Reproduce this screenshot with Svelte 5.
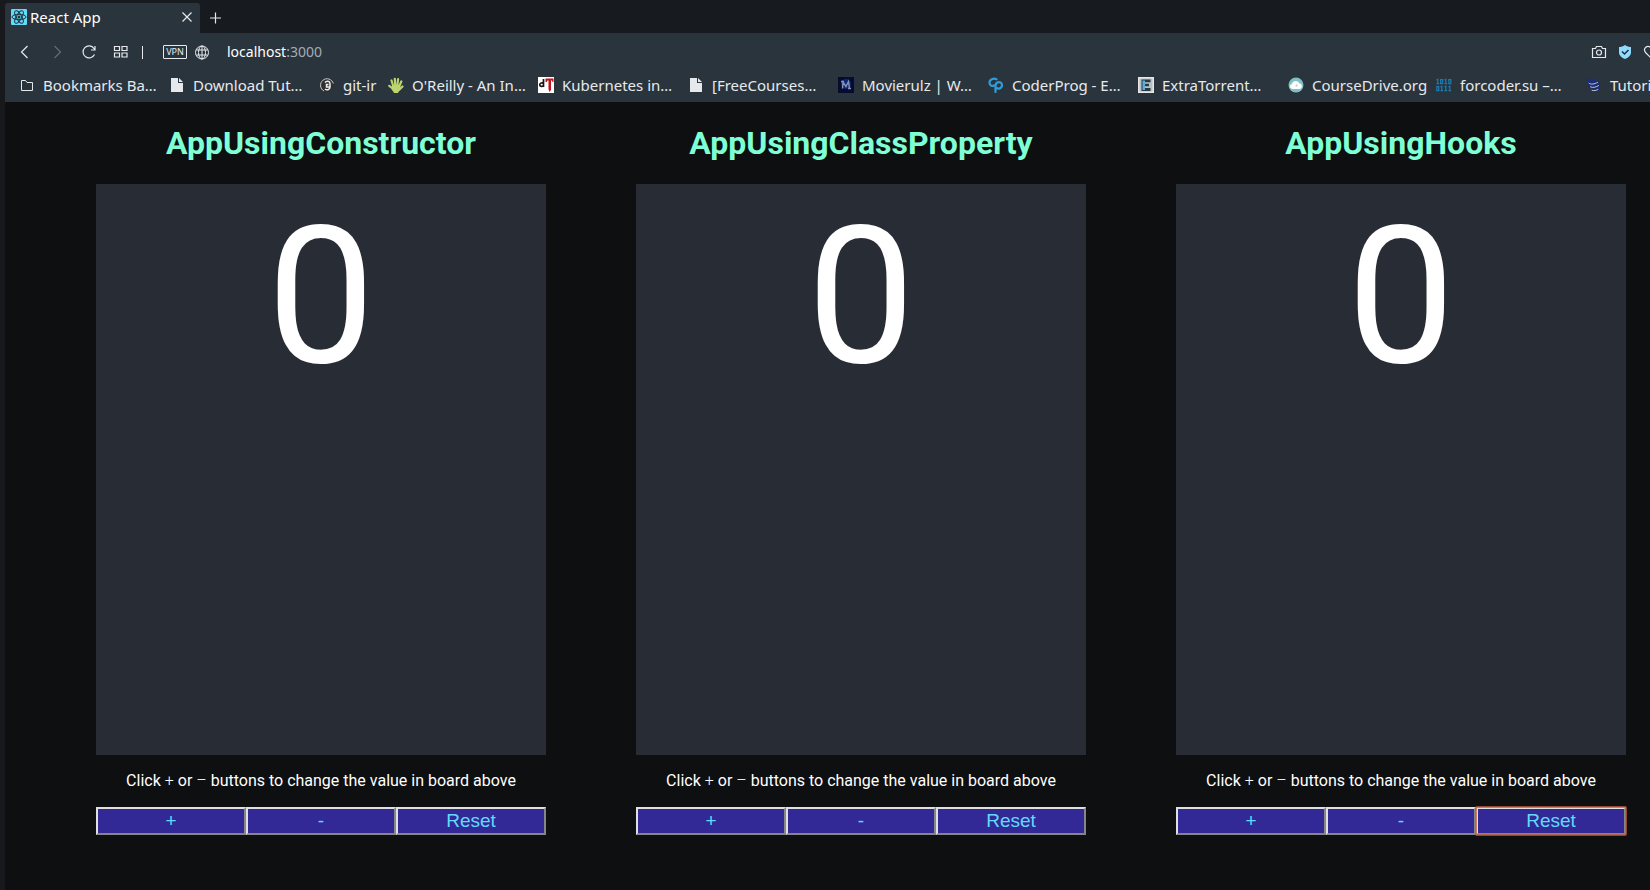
<script>
  const bookmarks = [
    { icon: 'folder', label: 'Bookmarks Ba…' },
    { icon: 'file', label: 'Download Tut…' },
    { icon: 'gitir', label: 'git-ir', short: true },
    { icon: 'hand', label: "O'Reilly - An In…" },
    { icon: 'dt', label: 'Kubernetes in…' },
    { icon: 'file', label: '[FreeCourses…' },
    { icon: 'movie', label: 'Movierulz | W…' },
    { icon: 'coder', label: 'CoderProg - E…' },
    { icon: 'extra', label: 'ExtraTorrent…' },
    { icon: 'cloud', label: 'CourseDrive.org', full: true },
    { icon: 'binary', label: 'forcoder.su –…' },
    { icon: 'tutorial', label: 'Tutori' },
  ];

  let counters = $state([
    { title: 'AppUsingConstructor', value: 0 },
    { title: 'AppUsingClassProperty', value: 0 },
    { title: 'AppUsingHooks', value: 0, active: true },
  ]);
</script>

{#snippet bookmarkIcon(name)}
  <svg class="fav" viewBox="0 0 16 16" aria-hidden="true">
    {#if name === 'folder'}
      <path d="M2.500 3.500h4l1.500 2h5.500v8h-11z" fill="none" stroke="#e4e8eb" stroke-linejoin="round" />
    {:else if name === 'file'}
      <path d="M2 1h7v5h5v9H2z M10 1l4 4h-4z" fill="#e6e9ec" />
    {:else if name === 'gitir'}
      <circle cx="8" cy="8" r="7" fill="#2f3032" />
      <path d="M5 14a6.500 6.500 0 1 1 9.300-7.500" fill="none" stroke="#d0ceca" stroke-width="1" />
      <path d="M6 5.500c1.500-2 5-1.500 5 1V10c0 3-3.500 3.500-5 2M9.500 7.500H7.500v2.500h3" fill="none" stroke="#efeeea" stroke-width="1.500" />
    {:else if name === 'hand'}
      <path d="M5.500 13 4 11 1.300 8.800M5.500 10 3.500 3.500M7.300 9 6.800 1.800M9.300 9l.8-7M11 10l2.300-5.500M11 13l3.500-3.500" fill="none" stroke="#bdd56e" stroke-width="2.200" stroke-linecap="round" />
      <path d="M4 8h8v4l-2 4H6l-2-4z" fill="#bdd56e" />
    {:else if name === 'dt'}
      <path d="M0 0h16v16H0z" fill="#fff" />
      <path d="M5.500 2v8M5.500 6.500c-1-1-3.800-.8-3.800 1.300s3 2 3.800.7" fill="none" stroke="#161616" stroke-width="1.700" />
      <path d="M7.500 1.500h8V5h-1l-.5-1.500h-1V13L11.500 15 10.500 12V3.500h-1L8.800 5H7.500z" fill="#c3121c" />
    {:else if name === 'movie'}
      <path d="M0 0h16v16H0z" fill="#060c30" />
      <circle cx="8" cy="7" r="5" fill="#10267c" />
      <path d="M4.500 11.500 5 5l3 4.500 2.500-5 1 7M3 4.500h3M10 11.500h3" fill="none" stroke="#8794ae" stroke-width="1.400" />
    {:else if name === 'coder'}
      <path d="M8.500 2.300C5.500.8 1.500 2.500 1.500 5.500S4 9.500 6 8.500" fill="none" stroke="#2e9cdb" stroke-width="2.200" stroke-linecap="round" />
      <path d="M7.500 15V9c0-5 6.500-5 6.500-1s-4 4-5.500 3" fill="none" stroke="#2e9cdb" stroke-width="2.200" stroke-linecap="round" />
    {:else if name === 'extra'}
      <path d="M0 0h16v16H0z" fill="#e6e6e6" />
      <path d="M1.500 1.500h13v13h-13z" fill="#b9c0c5" />
      <path d="M3.500 2.500h9v2.800h-5.500v1.500H11v2.400H7v1.800h5.500v3h-9z" fill="#2a3a45" />
      <path d="M4.500 3.500H7v9.500H4.500z" fill="#5aaeda" />
    {:else if name === 'cloud'}
      <circle cx="8" cy="8" r="7.500" fill="#7fc0c6" />
      <path d="M4 12a2.600 2.600 0 0 1-.3-5 4.300 4.300 0 0 1 8-.4A2.800 2.800 0 0 1 12 12z" fill="#fff" />
      <circle cx="8.500" cy="8.500" r="1" fill="#a7cdd0" />
    {:else if name === 'binary'}
      <g fill="none" stroke="#1c7bb0" stroke-width="1.200">
        <path d="M.5 3 1.800 2.200v4.500M.5 6.600h2.600M4.600 2.600h2v4h-2zM8.500 3l1.300-.8v4.500M8.500 6.600h2.600M12.800 2.600h2v4h-2z" />
        <path d="M.8 9.600h2v4h-2zM4.500 10l1.300-.8v4.500M4.500 13.600h2.600M8.500 10l1.300-.8v4.500M8.500 13.600h2.600M12.500 10l1.300-.8v4.500M12.500 13.600h2.600" />
      </g>
    {:else}
      <g fill="none" stroke-linecap="round">
        <path d="M2 2.500c2 2 4 1 7 0" stroke="#1b2d7e" stroke-width="2.400" />
        <path d="M2.500 6c2.500 2 5 1 9-1M4 9.500c3 1.500 6 .5 9-1.500M5.500 13c2.500 1 4.500.5 7-1" stroke="#14288c" stroke-width="2.400" />
        <path d="M3 6.300c2.500 1.600 5 .8 8.500-.8M4.500 9.900c3 1.200 5.500.2 8-1.300M6 13.300c2 .8 4 .2 6-.8" stroke="#c3ccd8" stroke-width="1" />
      </g>
    {/if}
  </svg>
{/snippet}

<div class="window">
  <div class="tabs">
    <div class="tab">
      <svg class="fav" viewBox="0 0 16 16" aria-hidden="true">
        <rect width="16" height="16" rx="1" fill="#61dafb" />
        <g fill="none" stroke="#20343e">
          <ellipse cx="8" cy="8" rx="7" ry="2.700" />
          <ellipse cx="8" cy="8" rx="7" ry="2.700" transform="rotate(60 8 8)" />
          <ellipse cx="8" cy="8" rx="7" ry="2.700" transform="rotate(120 8 8)" />
        </g>
        <circle cx="8" cy="8" r="1.500" fill="#20343e" />
      </svg>
      <span class="tab-title">React App</span>
      <button class="icon" aria-label="Close tab">
        <svg viewBox="0 0 16 16"><path d="m3.500 3.500 9 9m0-9-9 9" /></svg>
      </button>
    </div>
    <button class="icon" aria-label="New tab">
      <svg viewBox="0 0 16 16"><path d="M8.500 2.500v11M3 8h11" /></svg>
    </button>
  </div>

  <div class="toolbar">
    <nav class="nav">
      <button class="icon" aria-label="Back"><svg viewBox="0 0 16 16"><path d="M10.500 2 4.500 8l6 6" /></svg></button>
      <button class="icon dim" aria-label="Forward"><svg viewBox="0 0 16 16"><path d="m5.500 2 6 6-6 6" /></svg></button>
      <button class="icon" aria-label="Reload">
        <svg viewBox="0 0 16 16"><path d="M13.500 10.500a6 6 0 1 1-.5-6l.8 1.300M14 2v4h-4" /></svg>
      </button>
      <button class="icon" aria-label="Speed dial">
        <svg viewBox="0 0 16 16"><path d="M1.500 2.500h5v4h-5zM9 2.500h5v4H9zM1.500 9h5v4h-5zM9 9h5v4H9z" /></svg>
      </button>
    </nav>
    <span class="divider"></span>
    <button class="vpn">VPN</button>
    <svg class="line" viewBox="0 0 16 16" aria-hidden="true">
      <circle cx="8" cy="8.500" r="6.500" /><ellipse cx="8" cy="8.500" rx="3.500" ry="6.500" /><path d="M8 2v13M2.500 6h11M2.500 11h11" />
    </svg>
    <span class="address">localhost<span>:3000</span></span>
    <div class="actions">
      <button class="icon" aria-label="Snapshot">
        <svg viewBox="0 0 16 16"><path d="M1.500 4.500h3l1-2h5l1 2h3v9h-13z" /><circle cx="8" cy="8.500" r="2.500" /></svg>
      </button>
      <button class="icon" aria-label="Ad blocker">
        <svg viewBox="0 0 16 16"><path class="shield" d="M8 1c2 1.500 4 2 6 2v5.500c0 3-3 5.500-6 6.500-3-1-6-3.500-6-6.500V3c2 0 4-.5 6-2z" /><path class="tick" d="m5 7.500 2.500 2.500L11.500 6" /></svg>
      </button>
      <button class="icon" aria-label="Favourites">
        <svg viewBox="0 0 16 16"><path d="M8 14 2.500 8.500c-3-4 2-8.500 5.500-4.500 3.500-4 8.500.5 5.500 4.500z" /></svg>
      </button>
    </div>
  </div>

  <nav class="bookmarks">
    {#each bookmarks as b}
      <a href="#{b.icon}" class:short={b.short} class:full={b.full}>{@render bookmarkIcon(b.icon)}<span>{b.label}</span></a>
    {/each}
  </nav>

  <main>
    {#each counters as counter}
      <section>
        <h1>{counter.title}</h1>
        <div class="board">{counter.value}</div>
        <p>Click <i>+</i> or <i>–</i> buttons to change the value in board above</p>
        <div class="buttons">
          <button onclick={() => counter.value++}>+</button>
          <button onclick={() => counter.value--}>-</button>
          <button class:active={counter.active} onclick={() => (counter.value = 0)}>Reset</button>
        </div>
      </section>
    {/each}
  </main>
</div>

<style>
  :global(body) {
    margin: 0;
    background: #0d0f10;
  }
  .window {
    box-sizing: border-box;
    display: flex;
    flex-direction: column;
    min-height: 100vh;
    padding-top: 3px;
    border-left: 5px solid #17191d;
    overflow: hidden;
    background: #171a1e;
    color: #e6eaed;
    font: 15px/20px "Noto Sans", sans-serif;
  }
  button {
    font: inherit;
    cursor: pointer;
  }
  .fav {
    flex: none;
    width: 16px;
    height: 16px;
  }
  .icon {
    flex: none;
    display: block;
    width: 16px;
    height: 16px;
    padding: 0;
    border: 0;
    background: none;
  }
  .icon svg {
    display: block;
    width: 16px;
    height: 16px;
  }
  .icon svg,
  .line {
    fill: none;
    stroke: #e6eaed;
    stroke-width: 1.2;
  }
  .dim {
    opacity: 0.3;
  }
  .tabs {
    display: flex;
    align-items: center;
    gap: 7px;
    height: 30px;
  }
  .tab {
    box-sizing: border-box;
    display: flex;
    align-items: center;
    gap: 3px;
    width: 195px;
    height: 30px;
    padding: 0 5px 2px 6px;
    border-radius: 3px 3px 0 0;
    background: #2a343d;
    color: #fff;
  }
  .tab-title {
    flex: 1;
  }
  .toolbar {
    display: flex;
    align-items: center;
    height: 38px;
    padding-left: 12px;
    background: #2a343d;
  }
  .nav {
    display: flex;
    gap: 16px;
  }
  .divider {
    width: 1px;
    height: 13px;
    margin: 0 20px 0 13px;
    background: #e6eaed;
  }
  .vpn {
    box-sizing: border-box;
    width: 24px;
    height: 14px;
    margin-right: 7px;
    padding: 0;
    border: 1px solid #e6eaed;
    border-radius: 1px;
    background: none;
    color: #e6eaed;
    font-size: 9px;
    line-height: 12px;
  }
  .line {
    width: 16px;
    height: 16px;
    stroke-width: 1;
  }
  .address {
    margin-left: 17px;
    color: #fff;
    font-size: 14px;
  }
  .address span {
    color: #a3adb5;
  }
  .actions {
    display: flex;
    gap: 10px;
    margin: 0 -9px 0 auto;
  }
  .icon .shield {
    fill: #8fdcff;
    stroke: none;
  }
  .icon .tick {
    stroke: #1f2f3a;
    stroke-width: 1.5;
  }
  .bookmarks {
    display: flex;
    height: 31px;
    padding-left: 14px;
    overflow: hidden;
    background: #2a343d;
  }
  .bookmarks a {
    flex: none;
    display: flex;
    align-items: center;
    gap: 8px;
    width: 150px;
    height: 28px;
    color: inherit;
    text-decoration: none;
    white-space: nowrap;
  }
  .bookmarks .short {
    width: 69px;
  }
  .bookmarks .full {
    width: 148px;
  }
  main {
    flex: 1;
    display: grid;
    grid-template-columns: repeat(3, 1fr);
    gap: 90px;
    padding: 22px 24px 55px 91px;
    background: #0d0f10;
    color: #fff;
    font: 16px/20px Roboto, sans-serif;
  }
  section {
    display: flex;
    flex-direction: column;
    text-align: center;
  }
  h1 {
    margin: 0 0 22px;
    color: #7fffd4;
    font-size: 32px;
    line-height: 38px;
    font-weight: 700;
  }
  .board {
    flex: 1;
    background: #282c34;
    font-size: 192px;
    line-height: 225px;
  }
  p {
    margin: 16px 0;
  }
  i {
    font-style: normal;
    font-weight: 300;
  }
  .buttons {
    display: grid;
    grid-template-columns: repeat(3, 1fr);
  }
  .buttons button {
    height: 28px;
    padding: 0;
    border: 2px solid;
    border-color: #e0e0e0 #868686 #868686 #e0e0e0;
    border-radius: 0;
    background: #322896;
    color: #61dafb;
    font: 19px/22px "Liberation Sans", Arial, sans-serif;
  }
  .buttons .active {
    outline: 2px solid #c25a3cc0;
    outline-offset: -1px;
    border-radius: 1px;
  }
</style>
